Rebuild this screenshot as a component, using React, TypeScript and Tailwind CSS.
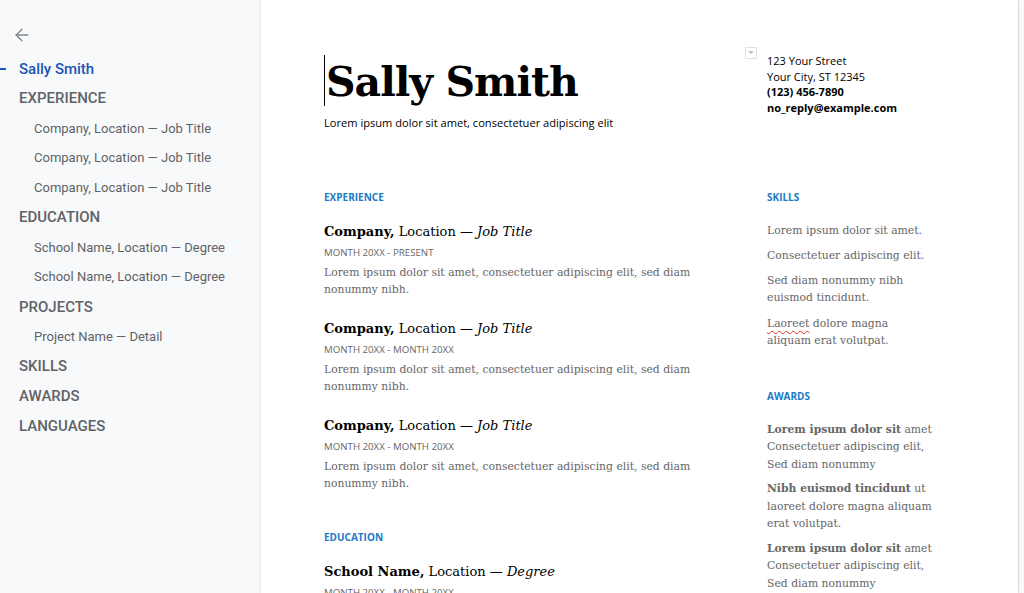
import { ArrowLeft } from 'lucide-react'

const outline = [
  { label: 'Sally Smith', level: 0, active: true },
  { label: 'EXPERIENCE', level: 1 },
  { label: 'Company, Location — Job Title', level: 2 },
  { label: 'Company, Location — Job Title', level: 2 },
  { label: 'Company, Location — Job Title', level: 2 },
  { label: 'EDUCATION', level: 1 },
  { label: 'School Name, Location — Degree', level: 2 },
  { label: 'School Name, Location — Degree', level: 2 },
  { label: 'PROJECTS', level: 1 },
  { label: 'Project Name — Detail', level: 2 },
  { label: 'SKILLS', level: 1 },
  { label: 'AWARDS', level: 1 },
  { label: 'LANGUAGES', level: 1 },
]

const serif = "font-['DejaVu_Serif',serif]"
const sans = "font-['Open_Sans',sans-serif]"

function Sidebar() {
  return (
    <aside className="w-[261px] shrink-0 bg-[#f8f9fa] pt-[25px] font-['Roboto',sans-serif]">
      <div className="pl-[12px] h-[20px] text-[#80868b]">
        <ArrowLeft size={20} strokeWidth={1.6} />
      </div>
      <nav className="mt-[9px]">
        {outline.map((item, i) => (
          <div key={i} className="flex items-center h-[29.75px]">
            <span className={item.active ? 'w-[6px] h-[1.5px] bg-[#1a56b8]' : 'w-[6px]'} />
            {item.level === 2 ? (
              <span className="ml-[28px] text-[13px] text-[#5f6368] whitespace-nowrap">{item.label}</span>
            ) : (
              <span
                className={
                  item.active
                    ? 'ml-[13px] text-[15px] font-medium text-[#1a56b8]'
                    : 'ml-[13px] text-[15px] font-medium text-[#5f6368]'
                }
              >
                {item.label}
              </span>
            )}
          </div>
        ))}
      </nav>
    </aside>
  )
}

function SectionHeading({ children }: { children: string }) {
  return <h2 className={`${sans} text-[10px] font-bold leading-[14px] text-[#2079c7]`}>{children}</h2>
}

function Entry({ org, place, role, dates, lines }: { org: string; place: string; role: string; dates: string; lines: string[] }) {
  return (
    <div>
      <div className={`${serif} text-[13px] leading-[20px] text-black whitespace-nowrap`}>
        <span className="font-bold">{org},</span> {place} — <em>{role}</em>
      </div>
      <div className={`${sans} mt-[4.5px] text-[9.7px] leading-[14px] text-[#666]`}>{dates}</div>
      {lines.length > 0 && (
        <div className={`${serif} mt-[4px] text-[10.8px] leading-[17px] text-[#666]`}>
          {lines.map((l, i) => (
            <div key={i} className="whitespace-nowrap">{l}</div>
          ))}
        </div>
      )}
    </div>
  )
}

const body = ['Lorem ipsum dolor sit amet, consectetuer adipiscing elit, sed diam', 'nonummy nibh.']

export default function App() {
  return (
    <div className="flex h-[593px] w-[1024px] overflow-hidden bg-[#f8f9fa]">
      <Sidebar />
      <main className="relative w-[757px] shrink-0 bg-white shadow-[0_0_3px_rgba(60,64,67,0.2)] pl-[63px] pt-[53px]">
        <header className="flex items-start">
          <div className="w-[443px] shrink-0">
            <div className="relative mt-[3px]">
              <span className="absolute left-0 top-[-1px] h-[51px] w-px bg-black" />
              <h1 className={`${serif} pl-[2px] text-[41px] font-bold leading-[52px] tracking-[-1px] text-black`}>Sally Smith</h1>
            </div>
            <p className={`${sans} mt-[7px] text-[11.1px] leading-[16px] text-black`}>
              Lorem ipsum dolor sit amet, consectetuer adipiscing elit
            </p>
          </div>
          <div className={`relative ${sans} text-[11px] leading-[15.7px] text-black`}>
            <span className="absolute left-[-22px] top-[-6px] flex h-[12px] w-[12px] items-center justify-center border border-[#e0e0e0] bg-white">
              <svg width="6" height="4" viewBox="0 0 6 4">
                <path d="M0 0h6L3 3z" fill="#bdbdbd" />
              </svg>
            </span>
            <div>123 Your Street</div>
            <div>Your City, ST 12345</div>
            <div className="font-bold">(123) 456-7890</div>
            <div className="font-bold">no_reply@example.com</div>
          </div>
        </header>

        <div className="mt-[59px] flex">
          <div className="w-[443px] shrink-0">
            <SectionHeading>EXPERIENCE</SectionHeading>
            <div className="mt-[17.5px] flex flex-col gap-[20.5px]">
              <Entry org="Company" place="Location" role="Job Title" dates="MONTH 20XX - PRESENT" lines={body} />
              <Entry org="Company" place="Location" role="Job Title" dates="MONTH 20XX - MONTH 20XX" lines={body} />
              <Entry org="Company" place="Location" role="Job Title" dates="MONTH 20XX - MONTH 20XX" lines={body} />
            </div>
            <div className="mt-[38px]">
              <SectionHeading>EDUCATION</SectionHeading>
            </div>
            <div className="mt-[17.5px]">
              <Entry org="School Name" place="Location" role="Degree" dates="MONTH 20XX - MONTH 20XX" lines={body} />
            </div>
          </div>

          <div className={`${serif} text-[10.8px] text-[#666]`}>
            <SectionHeading>SKILLS</SectionHeading>
            <div className="mt-[17.5px] flex flex-col gap-[8px] leading-[17px] whitespace-nowrap">
              <p>Lorem ipsum dolor sit amet.</p>
              <p>Consectetuer adipiscing elit.</p>
              <p>
                Sed diam nonummy nibh
                <br />
                euismod tincidunt.
              </p>
              <p className="mt-[1px]">
                <span className="underline decoration-wavy decoration-[#d93025] decoration-1 underline-offset-[3px]">Laoreet</span> dolore magna
                <br />
                aliquam erat volutpat.
              </p>
            </div>
            <div className="mt-[40px]">
              <SectionHeading>AWARDS</SectionHeading>
            </div>
            <div className="mt-[18px] flex flex-col gap-[7px] leading-[17.5px] whitespace-nowrap">
              <p>
                <b>Lorem ipsum dolor sit</b> amet
                <br />
                Consectetuer adipiscing elit,
                <br />
                Sed diam nonummy
              </p>
              <p>
                <b>Nibh euismod tincidunt</b> ut
                <br />
                laoreet dolore magna aliquam
                <br />
                erat volutpat.
              </p>
              <p>
                <b>Lorem ipsum dolor sit</b> amet
                <br />
                Consectetuer adipiscing elit,
                <br />
                Sed diam nonummy
              </p>
            </div>
          </div>
        </div>
      </main>
      <div className="flex-1 border-l border-[#e8eaed] bg-[#f8f9fa]" />
    </div>
  )
}
